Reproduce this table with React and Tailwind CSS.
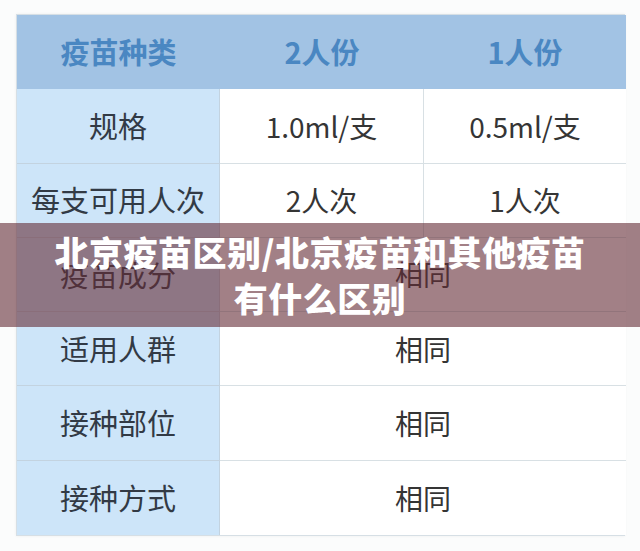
const rows = [
  { label: "规格", a: "1.0ml/支", b: "0.5ml/支" },
  { label: "每支可用人次", a: "2人次", b: "1人次" },
  { label: "疫苗成分", same: "相同" },
  { label: "适用人群", same: "相同" },
  { label: "接种部位", same: "相同" },
  { label: "接种方式", same: "相同" },
];

const font = { fontFamily: '"Noto Sans CJK SC", "Noto Sans", sans-serif' };

export default function App() {
  return (
    <div className="relative w-[640px] h-[551px] bg-[#fbfcfc] overflow-hidden" style={font}>
      <div className="pt-[14px] pl-[16px]">
        <div className="grid grid-cols-[203px_204px_202px] grid-rows-[repeat(7,1fr)] h-[522px] w-[609px] border border-[#d6dfe5] shadow-[0_0_3px_rgba(0,0,0,0.06)]">
          {/* header */}
          <div className="bg-[#a2c3e4] flex items-center justify-center text-[29px] font-bold text-[#4a87c2]">疫苗种类</div>
          <div className="bg-[#a2c3e4] flex items-center justify-center text-[29px] font-bold text-[#4a87c2]">2人份</div>
          <div className="bg-[#a2c3e4] flex items-center justify-center text-[29px] font-bold text-[#4a87c2]">1人份</div>

          {rows.map((r, i) => {
            const last = i === rows.length - 1;
            return [
              <div key={r.label} className={`bg-[#cde5f9] flex items-center justify-center text-[29px] text-[#323a45] border-r border-[#c3d3e0] ${last ? "" : "border-b"}`}>{r.label}</div>,
              r.same ? (
                <div key={r.label + "s"} className={`col-span-2 bg-white flex items-center justify-center text-[28px] text-[#353535] border-[#d8e0e4] ${last ? "" : "border-b"}`}>{r.same}</div>
              ) : (
                [
                  <div key={r.label + "a"} className="bg-white flex items-center justify-center text-[28px] text-[#353535] border-b border-r border-[#d8e0e4]">{r.a}</div>,
                  <div key={r.label + "b"} className="bg-white flex items-center justify-center text-[28px] text-[#353535] border-b border-[#d8e0e4]">{r.b}</div>,
                ]
              ),
            ];
          })}
        </div>
      </div>

      {/* title banner */}
      <div className="absolute left-0 top-[223px] w-full h-[104px] bg-[rgba(100,44,54,0.6)] flex flex-col items-center justify-center">
        <div className="text-white font-black text-[34px] leading-[46px] tracking-[0.5px]">北京疫苗区别/北京疫苗和其他疫苗</div>
        <div className="text-white font-black text-[34px] leading-[46px] tracking-[0.5px]">有什么区别</div>
      </div>
    </div>
  );
}
